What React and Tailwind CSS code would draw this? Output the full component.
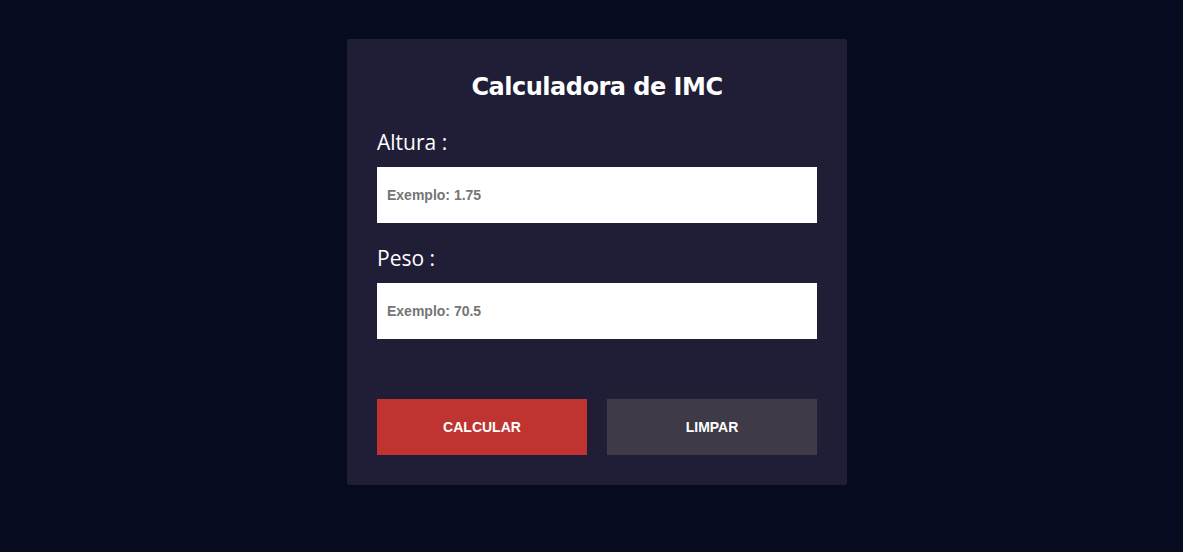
import React, { useState } from 'react';

const App = () => {
  const [altura, setAltura] = useState('');
  const [peso, setPeso] = useState('');

  const limpar = () => {
    setAltura('');
    setPeso('');
  };

  return (
    <div className="min-h-screen w-full bg-[#070b1f] pt-[39px] pl-[11px]">
      <div className="mx-auto w-[500px] rounded-[2px] bg-[#201e36] px-[30px] pt-[30px] pb-[30px]">
        <h1 className="text-center text-[24px] leading-[36px] font-bold text-white [font-family:'DejaVu_Sans',sans-serif] tracking-[-0.5px]">
          Calculadora de IMC
        </h1>

        <label className="mt-[22px] block text-[21px] leading-[30px] text-white [font-family:'Open_Sans',sans-serif]">
          Altura :
        </label>
        <input
          type="text"
          value={altura}
          onChange={(e) => setAltura(e.target.value)}
          placeholder="Exemplo: 1.75"
          className="mt-[10px] block h-[56px] w-full bg-white px-[10px] text-[14px] font-bold text-[#333] outline-none placeholder:text-[#757575] [font-family:'Liberation_Sans',Arial,sans-serif]"
        />

        <label className="mt-[20px] block text-[21px] leading-[30px] text-white [font-family:'Open_Sans',sans-serif]">
          Peso :
        </label>
        <input
          type="text"
          value={peso}
          onChange={(e) => setPeso(e.target.value)}
          placeholder="Exemplo: 70.5"
          className="mt-[10px] block h-[56px] w-full bg-white px-[10px] text-[14px] font-bold text-[#333] outline-none placeholder:text-[#757575] [font-family:'Liberation_Sans',Arial,sans-serif]"
        />

        <div className="mt-[60px] flex gap-[20px]">
          <button className="h-[56px] flex-1 bg-[#bf3430] text-[14px] font-bold text-white uppercase [font-family:'Liberation_Sans',Arial,sans-serif]">
            Calcular
          </button>
          <button
            onClick={limpar}
            className="h-[56px] flex-1 bg-[#3e3a46] text-[14px] font-bold text-white uppercase [font-family:'Liberation_Sans',Arial,sans-serif]"
          >
            Limpar
          </button>
        </div>
      </div>
    </div>
  );
};

export default App;
